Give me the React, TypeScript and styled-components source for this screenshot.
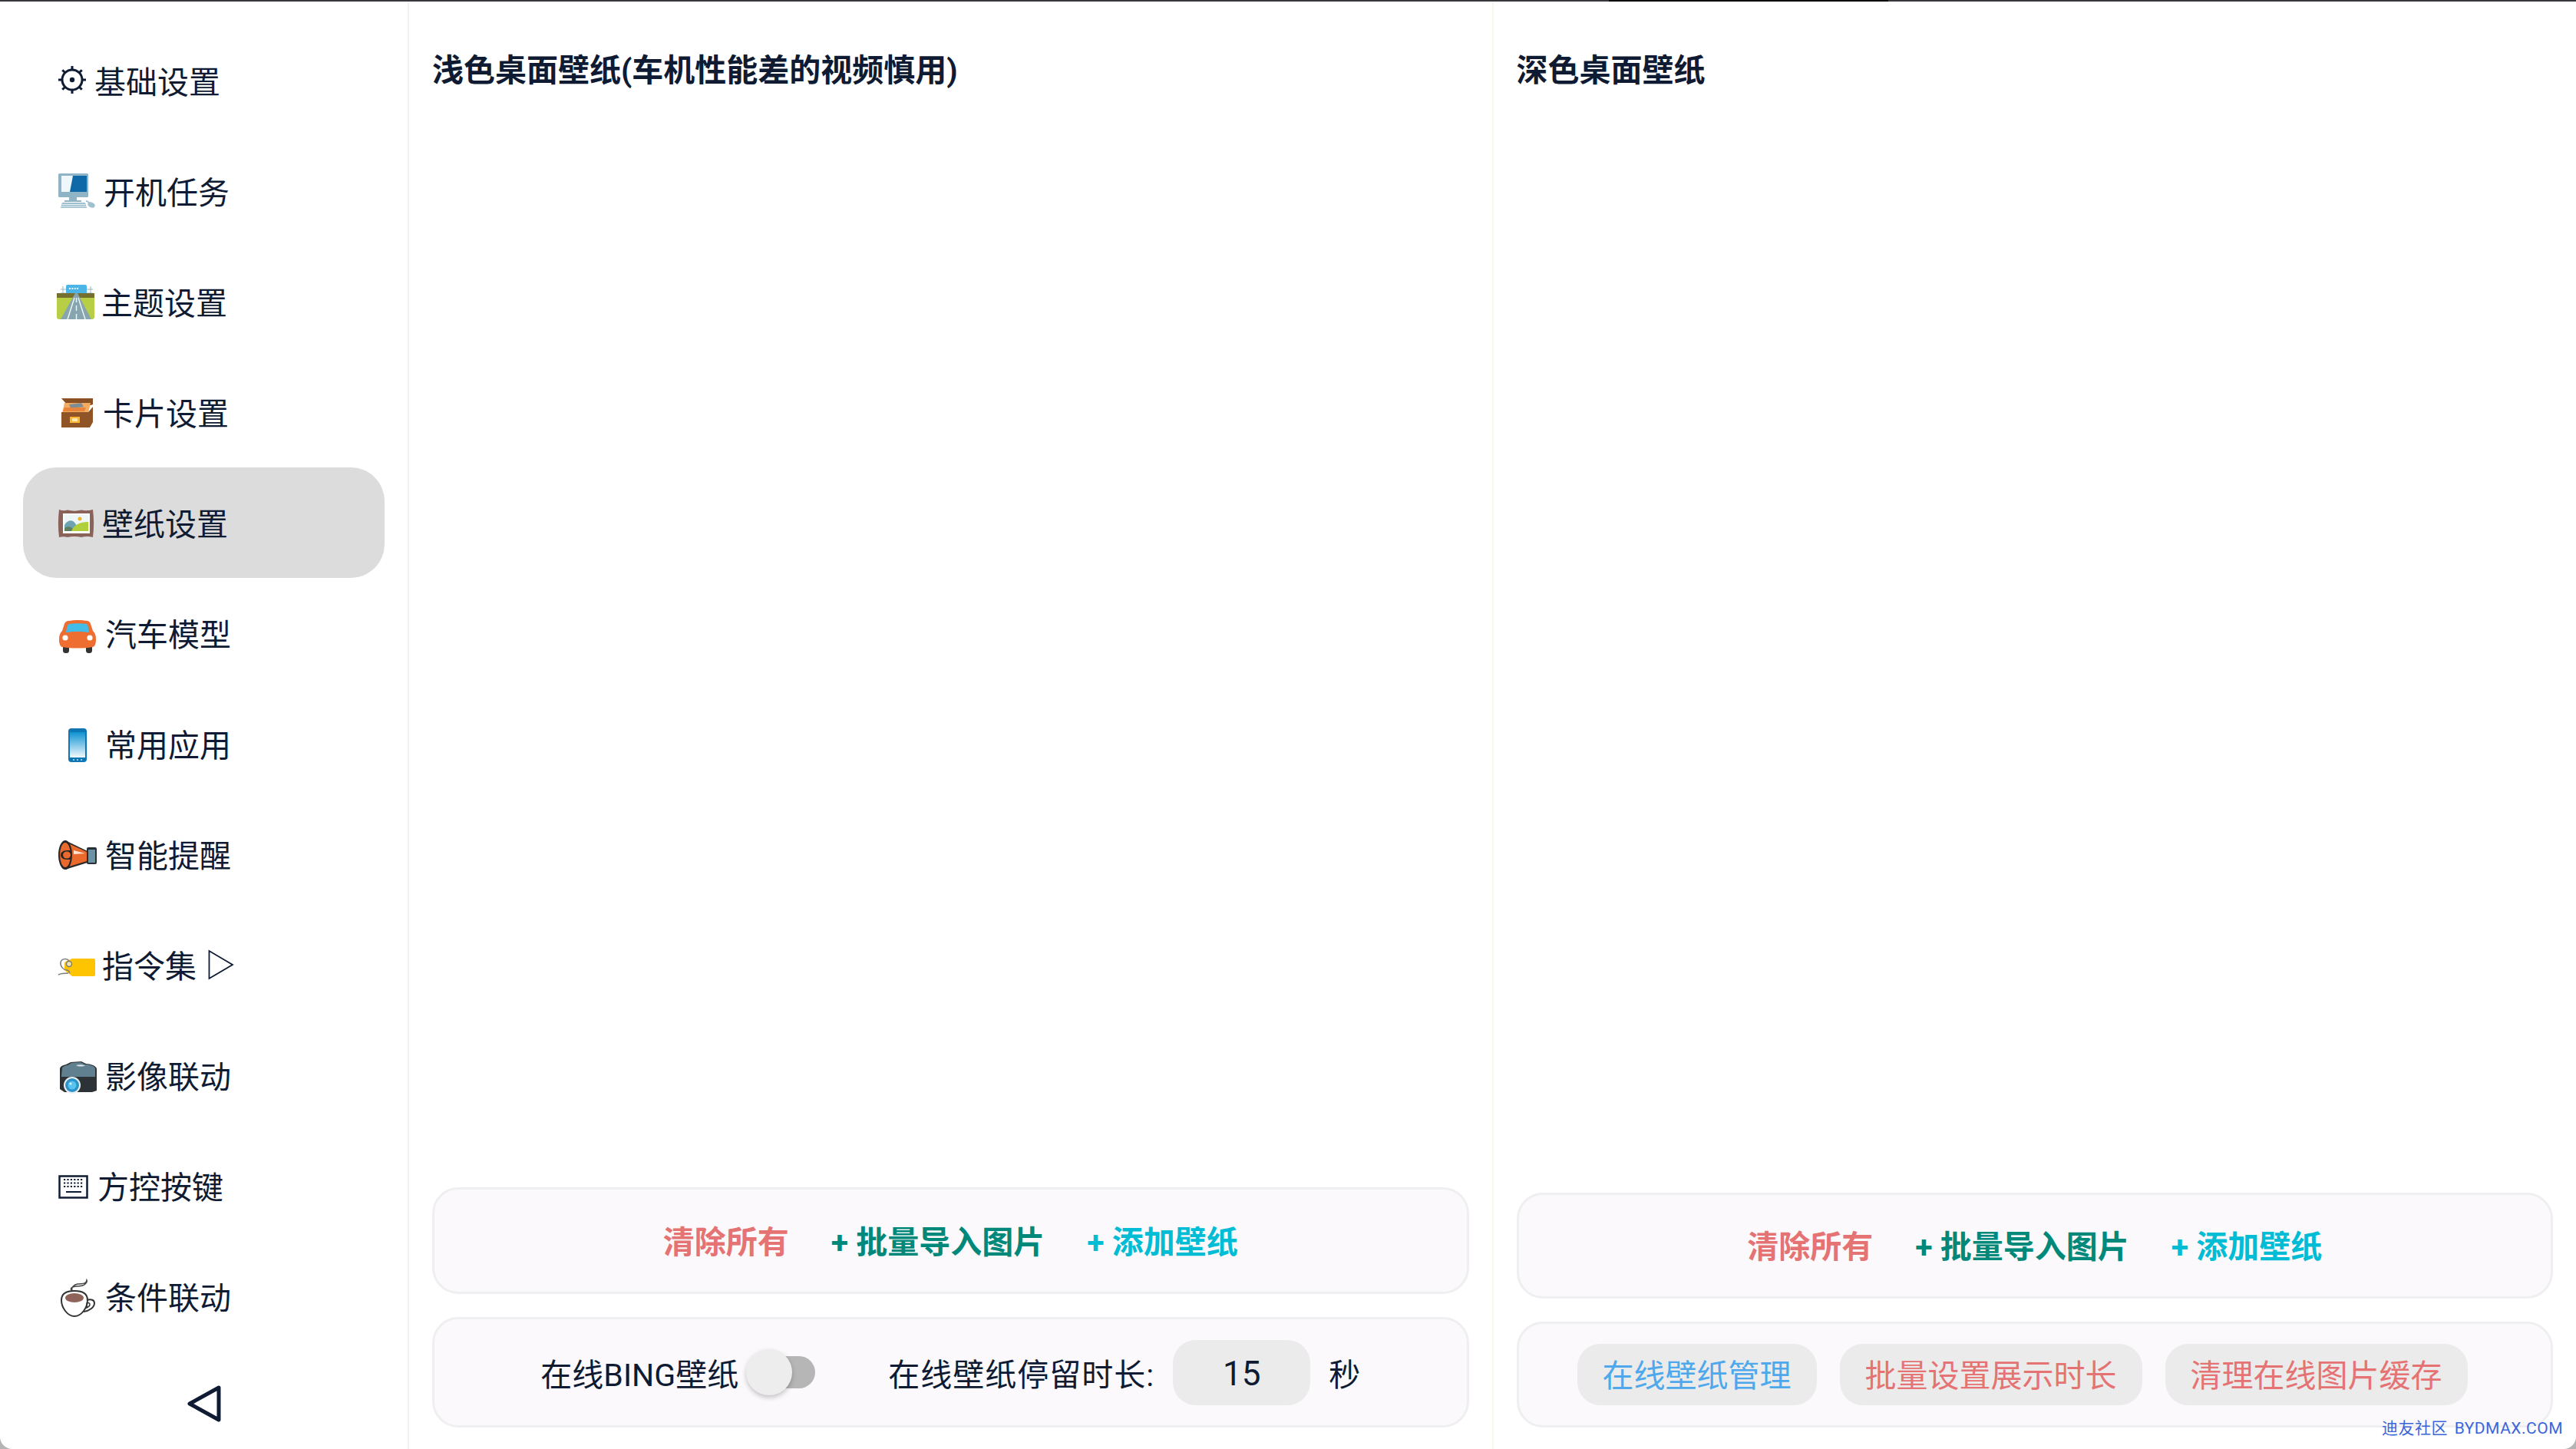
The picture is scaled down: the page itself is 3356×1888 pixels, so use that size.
/**
 * Wallpaper settings page
 */
// React core
import * as React from 'react';

// Styled-components
import styled, { createGlobalStyle } from 'styled-components';

const INK = '#0f1b32';

type TextButtonProps = {
  $color: string;
};

type CardProps = {
  $height: number;
};

const GlobalStyle = createGlobalStyle`
  html, body {
    margin: 0;
    padding: 0;
    background: #b4b4b4;
  }
  body {
    font-family: Roboto, "Noto Sans CJK SC", sans-serif;
    color: ${INK};
  }
`;

const Screen = styled.div`
  position: relative;
  display: flex;
  flex-direction: column;
  width: 3356px;
  height: 1888px;
  overflow: hidden;
  background: #ffffff;
  border-radius: 0 0 16px 16px;
`;

const StatusLine = styled.div`
  flex: none;
  display: flex;
  height: 2px;
  background: #38383c;
`;

const StatusLineGap = styled.div`
  width: 364px;
  margin-left: 2096px;
  background: #000000;
`;

const Body = styled.div`
  flex: 1;
  display: flex;
  min-height: 0;
`;

const Sidebar = styled.nav`
  flex: none;
  display: flex;
  flex-direction: column;
  box-sizing: border-box;
  width: 533px;
  padding: 31px 30px 0 30px;
  border-right: 2px solid #f2f2f2;
`;

const MenuItem = styled.div<{ $active?: boolean }>`
  flex: none;
  display: flex;
  align-items: center;
  gap: 11px;
  box-sizing: border-box;
  height: 144px;
  padding: 0 0 2px 46px;
  border-radius: 44px;
  font-size: 41px;
  background: ${(props) => (props.$active ? '#dcdcdd' : 'transparent')};
`;

const MenuIcon = styled.svg`
  flex: none;
  height: 48px;
  overflow: visible;
`;

const MenuArrow = styled.svg`
  flex: none;
  width: 34px;
  height: 40px;
  margin-left: 4px;
  margin-top: 2px;
`;

const BackButton = styled.div`
  flex: 1;
  display: flex;
  align-items: center;
  justify-content: center;
  padding-top: 8px;
`;

const BackIcon = styled.svg`
  width: 48px;
  height: 52px;
`;

const Column = styled.section<{ $divider?: boolean }>`
  flex: 1;
  display: flex;
  flex-direction: column;
  box-sizing: border-box;
  padding: 60px 30px 28px 30px;
  border-right: ${(props) => (props.$divider ? '2px solid #f9f6ee' : 'none')};
`;

const Title = styled.h2`
  margin: 0;
  font-size: 41px;
  line-height: 60px;
  font-weight: 700;
`;

const CardStack = styled.div`
  margin-top: auto;
  display: flex;
  flex-direction: column;
  gap: 30px;
`;

const Card = styled.div<CardProps>`
  display: flex;
  align-items: center;
  justify-content: center;
  box-sizing: border-box;
  height: ${(props) => props.$height}px;
  border: 3px solid #efeef0;
  border-radius: 34px;
  background: #fbf9fb;
  font-size: 41px;
`;

const ActionRow = styled(Card)`
  gap: 55px;
  padding-bottom: 4px;
`;

const ActionText = styled.span<TextButtonProps>`
  font-weight: 700;
  color: ${(props) => props.$color};
`;

const OptionLabel = styled.span`
  white-space: nowrap;
`;

const DurationLabel = styled(OptionLabel)`
  letter-spacing: 1px;
`;

const Toggle = styled.div`
  position: relative;
  flex: none;
  width: 80px;
  height: 42px;
  margin: 0 95px 0 20px;
  border-radius: 21px;
  background: #b6b6b6;
`;

const ToggleKnob = styled.div`
  position: absolute;
  top: -9px;
  left: -10px;
  width: 60px;
  height: 60px;
  border-radius: 50%;
  background: #ededed;
  box-shadow: 0 3px 6px rgba(0, 0, 0, 0.22);
`;

const DurationBox = styled.div`
  flex: none;
  display: flex;
  align-items: center;
  justify-content: center;
  box-sizing: border-box;
  width: 179px;
  height: 85px;
  margin: 0 24px 0 24px;
  padding-top: 3px;
  border-radius: 30px;
  background: #ebebeb;
  font-size: 44px;
`;

const ButtonRow = styled(Card)`
  justify-content: flex-start;
  gap: 30px;
  padding-left: 76px;
`;

const PillButton = styled.div<TextButtonProps>`
  flex: none;
  display: flex;
  align-items: center;
  box-sizing: border-box;
  height: 80px;
  padding: 0 33px 4px;
  border-radius: 30px;
  background: #ebebeb;
  color: ${(props) => props.$color};
`;

const Watermark = styled.div`
  position: absolute;
  right: 17px;
  bottom: 12px;
  font-size: 21px;
  line-height: 30px;
  letter-spacing: 0.5px;
  color: #3b66d9;
  word-spacing: 3px;
`;

// Menu icons, drawn on a canvas 48 high with the left edge at the icon column
const GearIcon = () => (
  <MenuIcon viewBox="0 0 36 48" width={36}>
    <circle cx="18" cy="24" r="13" fill="none" stroke={INK} strokeWidth="3" />
    <circle cx="18" cy="24" r="3.2" fill={INK} />
    {[0, 45, 90, 135, 180, 225, 270, 315].map((angle) => (
      <rect key={angle} x="16.5" y="6" width="3" height="5" fill={INK} transform={`rotate(${angle} 18 24)`} />
    ))}
  </MenuIcon>
);

const ComputerIcon = () => (
  <MenuIcon viewBox="0 0 48 48" width={48}>
    <rect x="0" y="2" width="39" height="31" rx="1.5" fill="#8fb4c6" />
    <rect x="4" y="5" width="33" height="21" fill="#0f69a8" />
    <path d="M4 5h15l-4 21H4z" fill="#eef7fb" />
    <path d="M14 33h10v4h6v2H8v-2h6z" fill="#8fb4c6" />
    <path d="M5 40h30l2 7H3z" fill="#9fc0cf" />
    <path d="M5 42.5h30M4 45h32" stroke="#e6f0f4" strokeWidth="1" />
    <path d="M36 38c2 0 3 1 4 2" fill="none" stroke="#8fb4c6" strokeWidth="1.5" />
    <ellipse cx="43" cy="43" rx="5" ry="3.4" fill="#9fc0cf" transform="rotate(25 43 43)" />
  </MenuIcon>
);

const RoadIcon = () => (
  <MenuIcon viewBox="0 0 45 48" width={45}>
    <path d="M6 5v20M42 5v20M3 9h42M3 14h42" stroke="#9ab6bf" strokeWidth="1" />
    <rect x="10" y="3" width="27" height="12" rx="2" fill="#4cb4e6" />
    <path d="M14 8h12" stroke="#eaf7fd" strokeWidth="2" strokeDasharray="2 1.4" />
    <path d="M-2 14h49v6H-2z" fill="#75702f" />
    <path d="M-2 20h49v25a3 3 0 0 1-3 3H1a3 3 0 0 1-3-3z" fill="#b8cf45" />
    <path d="M22 14h3l18 34H3z" fill="#86a5ae" />
    <path d="M21 20l-9 28M26 20l9 28M23.5 20v6M23.5 30v7M23.5 41v7" stroke="#f2f7f8" strokeWidth="1.4" fill="none" />
  </MenuIcon>
);

const BoxIcon = () => (
  <MenuIcon viewBox="0 0 47 48" width={47}>
    <path d="M4 7h41v8l-3 1H12z" fill="#8a4f22" />
    <path d="M8 13h34l-3 13H5z" fill="#f3ac62" />
    <path d="M14 15l16-2 3 5-17 2z" fill="#7f8e96" />
    <path d="M8 19h28l-2 5H6z" fill="#e8853a" />
    <path d="M4 25h35l6-7v20l-4 7H4z" fill="#8f5526" />
    <rect x="15" y="31" width="13" height="8" fill="#ffb52e" />
    <rect x="18" y="33" width="7" height="4" fill="#ffe9b0" />
  </MenuIcon>
);

const PictureIcon = () => (
  <MenuIcon viewBox="0 0 46 48" width={46}>
    <path d="M1 8c4 1.500 7 1.500 11 .5 6 1.500 12 1.500 18 0 5 1 9 1 15-.5 1.500 12 1.500 24 0 36-5-1.500-10-1.500-15 0-6-1.500-12-1.500-18 0-4-1-7-1-11 0-1.500-12-1.500-24 0-36z" fill="#8b625a" />
    <rect x="6" y="13" width="35" height="26" fill="#ffffff" />
    <rect x="8" y="15" width="31" height="21" fill="#eef7f8" />
    <circle cx="28" cy="20" r="2.500" fill="#f0b429" />
    <path d="M8 36V28c3-5 7-7 11-5 3 2 5 5 7 13z" fill="#6ea3b4" />
    <path d="M8 36v-4c5-3 9-2 14 4z" fill="#5d7f62" />
    <path d="M17 36c3-8 11-12 22-12v12z" fill="#b0cf3a" />
  </MenuIcon>
);

const CarIcon = () => (
  <MenuIcon viewBox="0 0 50 48" width={50}>
    <rect x="6" y="39" width="8" height="12" rx="3.500" fill="#333333" />
    <rect x="36" y="39" width="8" height="12" rx="3.500" fill="#333333" />
    <path d="M13 9c7-1.500 18-1.500 25 0 3 .7 4 3 5 7l2 6c3 3 4 6 4 11 0 5-1 9-4 10-12 2-28 2-40 0-3-1-4-5-4-10 0-5 1-8 4-11l2-6c1-4 2-6.300 6-7z" fill="#ee6d31" />
    <path d="M14 13c7-1 16-1 23 0 1.500.5 2.500 7 3 11-9-1.500-21-1.500-30 0 .5-4 2-10.500 4-11z" fill="#43bce8" />
    <circle cx="9" cy="31" r="3.600" fill="#fff" />
    <circle cx="41" cy="31" r="3.600" fill="#fff" />
  </MenuIcon>
);

const PhoneIcon = () => (
  <MenuIcon viewBox="0 0 50 48" width={50}>
    <defs>
      <linearGradient id="phoneScreen" x1="0" y1="0" x2="0" y2="1">
        <stop offset="0" stopColor="#0f92d2" />
        <stop offset="1" stopColor="#f3fafd" />
      </linearGradient>
    </defs>
    <rect x="13" y="5" width="24" height="44" rx="4" fill="#0e76b2" />
    <rect x="15" y="10" width="20" height="33" fill="url(#phoneScreen)" />
    <path d="M19 46h2M24 46h2M29 46h2" stroke="#bfe2f3" strokeWidth="1.500" />
  </MenuIcon>
);

const HornIcon = () => (
  <MenuIcon viewBox="0 0 50 48" width={50}>
    <rect x="37" y="16" width="13" height="22" rx="2" fill="#262f36" />
    <rect x="39" y="19" width="9" height="17" fill="#6c93a3" />
    <path d="M9 7l29 14v15L9 45z" fill="#2b2b2b" />
    <path d="M11 10l26 12v12L11 42z" fill="#ea6a2d" />
    <path d="M20 20l15 4-15 1z" fill="#ffe3d3" />
    <ellipse cx="9" cy="26" rx="9" ry="19" fill="#262626" />
    <ellipse cx="9" cy="26" rx="7" ry="16" fill="#ea6a2d" />
    <path d="M11 20c-5 0-8 3-8 6s3 6 8 6h6v-12z" fill="#262626" />
    <ellipse cx="11" cy="26" rx="5" ry="4.500" fill="#ea6a2d" />
  </MenuIcon>
);

const TagIcon = () => (
  <MenuIcon viewBox="0 0 46 48" width={46}>
    <path d="M18 17h28a2 2 0 0 1 2 2v19a2 2 0 0 1-2 2H18l-9-7c-1-1-1-2-1-3v-6c0-1 0-2 1-3z" fill="#ffc400" />
    <circle cx="14" cy="24" r="3.500" fill="#f2e2b0" stroke="#7d7d7d" strokeWidth="1.500" />
    <path d="M14 20c-3-4-10-3-11 2s4 10 8 10c3 0 3 2 4 4M0 38c4-2 8-2 13-2" fill="none" stroke="#7d7d7d" strokeWidth="1.500" />
  </MenuIcon>
);

const CameraIcon = () => (
  <MenuIcon viewBox="0 0 50 48" width={50}>
    <path d="M2 17c0-3 3-5 8-6l6-3 14-1 6 3c6 0 14 3 14 7v28l-6 2H8l-6-4z" fill="#2d3236" />
    <path d="M5 15c2-2 5-3 7-3l5-3 12-1 6 3c6 0 12 2 13 5v11H4z" fill="#60808f" />
    <path d="M23 12c3-1 8-1 12 .5-3 1.500-9 1.500-12-.5z" fill="#d7e3e8" />
    <circle cx="18" cy="38" r="11" fill="#e8f0f3" />
    <circle cx="18" cy="38" r="9" fill="#2b93c9" />
    <circle cx="18" cy="38" r="5.500" fill="#57c3ef" />
    <circle cx="16" cy="36" r="1.500" fill="#dff4fc" />
  </MenuIcon>
);

const KeyboardIcon = () => (
  <MenuIcon viewBox="0 0 40 48" width={40}>
    <rect x="1.500" y="12.500" width="36" height="28" fill="none" stroke={INK} strokeWidth="2.500" />
    {[17, 21.500, 26].map((y) => (
      <path key={y} d="M7 0h26" transform={`translate(0 ${y})`} stroke={INK} strokeWidth="2.200" strokeDasharray="2.200 2.200" />
    ))}
    <path d="M10 33h20" stroke={INK} strokeWidth="2" />
  </MenuIcon>
);

const CoffeeIcon = () => (
  <MenuIcon viewBox="0 0 50 48" width={50}>
    <path d="M18 18c-4-3 0-6 6-6 5 0 9-1 11-3 2-2 3-3 2-5-1 6-6 4-12 5-5 1-9 5-7 9z" fill="none" stroke="#444444" strokeWidth="1.500" />
    <path d="M4 30c0-8 6-12 17-12s17 4 17 12c0 10-8 21-17 21S4 40 4 30z" fill="#ffffff" stroke="#333333" strokeWidth="2" />
    <ellipse cx="21" cy="27" rx="12" ry="6" fill="#90635a" />
    <path d="M37 30c6-2 10 0 10 4 0 5-6 10-14 11" fill="none" stroke="#333333" strokeWidth="2" />
    <path d="M37 34c3-1 4 0 4 2 0 2-2 3-4 4z" fill="none" stroke="#333333" strokeWidth="1.500" />
  </MenuIcon>
);

const menu = [
  { label: '基础设置', icon: <GearIcon /> },
  { label: '开机任务', icon: <ComputerIcon /> },
  { label: '主题设置', icon: <RoadIcon /> },
  { label: '卡片设置', icon: <BoxIcon /> },
  { label: '壁纸设置', icon: <PictureIcon />, active: true },
  { label: '汽车模型', icon: <CarIcon /> },
  { label: '常用应用', icon: <PhoneIcon /> },
  { label: '智能提醒', icon: <HornIcon /> },
  { label: '指令集', icon: <TagIcon />, arrow: true },
  { label: '影像联动', icon: <CameraIcon /> },
  { label: '方控按键', icon: <KeyboardIcon /> },
  { label: '条件联动', icon: <CoffeeIcon /> },
];

// The three actions both wallpaper columns share
const WallpaperActions = ({ height }: { height: number }) => (
  <ActionRow $height={height}>
    <ActionText $color="#e57373">清除所有</ActionText>
    <ActionText $color="#00897b">+ 批量导入图片</ActionText>
    <ActionText $color="#00bcd4">+ 添加壁纸</ActionText>
  </ActionRow>
);

export default function App() {
  return (
    <Screen lang="zh-CN">
      <GlobalStyle />
      <StatusLine>
        <StatusLineGap />
      </StatusLine>
      <Body>
        <Sidebar>
          {menu.map((item) => (
            <MenuItem key={item.label} $active={item.active}>
              {item.icon}
              {item.label}
              {item.arrow && (
                <MenuArrow viewBox="0 0 34 40">
                  <path d="M1.500 2v36L32 20z" fill="none" stroke={INK} strokeWidth="1.800" />
                </MenuArrow>
              )}
            </MenuItem>
          ))}
          <BackButton>
            <BackIcon viewBox="0 0 48 52">
              <path d="M43 5L5 26l38 21z" fill="none" stroke={INK} strokeWidth="5" strokeLinejoin="round" />
            </BackIcon>
          </BackButton>
        </Sidebar>

        <Column $divider>
          <Title>浅色桌面壁纸(车机性能差的视频慎用)</Title>
          <CardStack>
            <WallpaperActions height={139} />
            <Card $height={144}>
              <OptionLabel>在线BING壁纸</OptionLabel>
              <Toggle>
                <ToggleKnob />
              </Toggle>
              <DurationLabel>在线壁纸停留时长:</DurationLabel>
              <DurationBox>15</DurationBox>
              <OptionLabel>秒</OptionLabel>
            </Card>
          </CardStack>
        </Column>

        <Column>
          <Title>深色桌面壁纸</Title>
          <CardStack>
            <WallpaperActions height={138} />
            <ButtonRow $height={138}>
              <PillButton $color="#4fa8ec">在线壁纸管理</PillButton>
              <PillButton $color="#e57373">批量设置展示时长</PillButton>
              <PillButton $color="#e57373">清理在线图片缓存</PillButton>
            </ButtonRow>
          </CardStack>
        </Column>
      </Body>
      <Watermark>迪友社区 BYDMAX.COM</Watermark>
    </Screen>
  );
}
